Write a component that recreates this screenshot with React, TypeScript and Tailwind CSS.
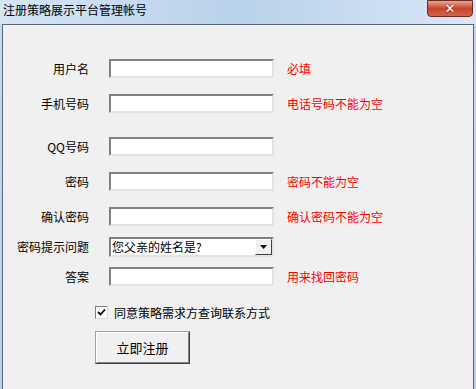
import React from 'react';

const font = { fontFamily: '"Noto Sans CJK SC", "DejaVu Sans", sans-serif' };

const Field: React.FC<{ label: string; hint?: string; mt: string }> = ({ label, hint, mt }) => (
  <div className={`flex items-center h-[19px] ${mt}`}>
    <div className="w-[86px] text-right text-[12px] text-black leading-none">{label}</div>
    <div className="ml-[20px] w-[165px] h-[19px] bg-white border-2 border-t-[#808080] border-l-[#808080] border-b-[#e3e3e3] border-r-[#e3e3e3]" />
    {hint && <div className="ml-[13px] text-[12px] text-[#ff0000] leading-none">{hint}</div>}
  </div>
);

export default function App() {
  return (
    <div className="w-[476px] h-[389px] bg-gradient-to-b from-[#c5daf0] to-[#b9d1ec] flex flex-col" style={font}>
      <div className="h-[24px] flex items-start justify-between bg-gradient-to-r from-[#d6e5f5] via-[#b9d1ea] to-[#d9e7f6]">
        <div className="pl-[3px] pt-[4px] text-[12px] text-black leading-none">注册策略展示平台管理帐号</div>
        <div className="mr-[3px] w-[46px] h-[17px] rounded-b-[4px] border border-[#6b2a22] bg-gradient-to-b from-[#e8a493] via-[#c7442c] to-[#d0644c] flex items-center justify-center">
          <span className="text-white text-[13px] font-bold leading-none" style={{ fontFamily: '"DejaVu Sans", sans-serif', textShadow: '0 0 2px #5a1a10' }}>✕</span>
        </div>
      </div>
      <div className="flex-1 mx-[2px] border border-[#59677a] border-b-0 bg-[#f0f0f0] flex flex-col">
        <Field label="用户名" hint="必填" mt="mt-[34px]" />
        <Field label="手机号码" hint="电话号码不能为空" mt="mt-[16px]" />
        <Field label="QQ号码" mt="mt-[24px]" />
        <Field label="密码" hint="密码不能为空" mt="mt-[16px]" />
        <Field label="确认密码" hint="确认密码不能为空" mt="mt-[16px]" />
        <div className="flex items-center h-[20px] mt-[11px]">
          <div className="w-[86px] text-right text-[12px] text-black leading-none">密码提示问题</div>
          <div className="ml-[20px] w-[165px] h-[20px] bg-white border-2 border-t-[#808080] border-l-[#808080] border-b-[#e3e3e3] border-r-[#e3e3e3] flex items-center">
            <span className="flex-1 pl-[1px] text-[12px] text-black leading-none">您父亲的姓名是?</span>
            <div className="w-[17px] h-[16px] bg-[#f0f0f0] border border-t-white border-l-white border-b-[#404040] border-r-[#404040] flex items-center justify-center">
              <svg width="7" height="4" viewBox="0 0 7 4"><path d="M0 0h7L3.5 4z" fill="#000" /></svg>
            </div>
          </div>
        </div>
        <Field label="答案" hint="用来找回密码" mt="mt-[10px]" />
        <div className="flex items-center mt-[20px] ml-[92px] h-[13px]">
          <div className="w-[13px] h-[13px] bg-white border border-t-[#808080] border-l-[#808080] border-b-[#dcdcdc] border-r-[#dcdcdc] flex items-center justify-center">
            <svg width="9" height="9" viewBox="0 0 9 9"><path d="M1 4l2.5 2.5L8 1.5" stroke="#000" strokeWidth="1.8" fill="none" /></svg>
          </div>
          <span className="ml-[6px] text-[12px] text-black leading-none">同意策略需求方查询联系方式</span>
        </div>
        <div className="mt-[12px] ml-[92px] w-[95px] h-[33px] bg-[#f0f0f0] border border-t-[#a0a0a0] border-l-[#a0a0a0] border-b-[#404040] border-r-[#404040] flex items-center justify-center">
          <div className="w-full h-full border border-t-white border-l-white border-b-[#808080] border-r-[#808080] flex items-center justify-center text-[13px] text-black leading-none">立即注册</div>
        </div>
      </div>
    </div>
  );
}
